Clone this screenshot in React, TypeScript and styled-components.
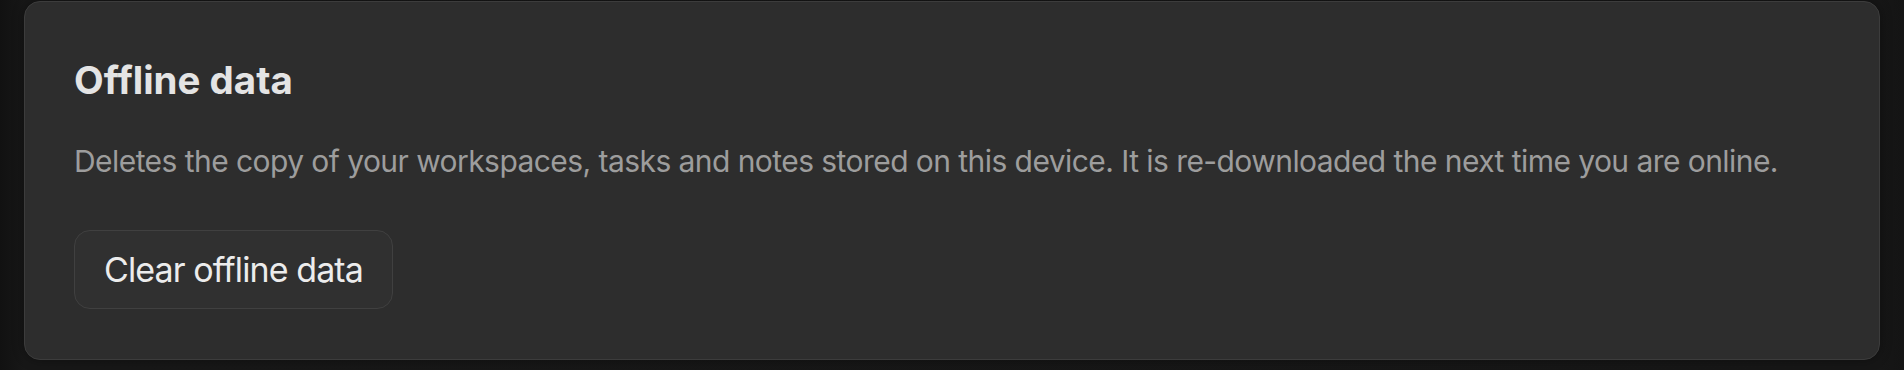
import React from "react";
import styled, { createGlobalStyle } from "styled-components";

const GlobalStyle = createGlobalStyle`
  html, body {
    margin: 0;
    padding: 0;
    background: #151515;
  }
  body {
    font-family: Inter, "Noto Sans", "Liberation Sans", sans-serif;
    -webkit-font-smoothing: antialiased;
  }
`;

const Page = styled.div`
  box-sizing: border-box;
  width: 1904px;
  height: 370px;
  padding: 1px 24px 0 24px;
  background: linear-gradient(90deg, #111111 0px, #171717 24px, #161616 1880px, #141414 1904px);
  overflow: hidden;
`;

const Card = styled.section`
  box-sizing: border-box;
  height: 359px;
  display: flex;
  flex-direction: column;
  align-items: flex-start;
  padding: 55px 49px 0 49px;
  background: #2d2d2d;
  border: 1px solid #3c3c3c;
  border-radius: 16px;
  box-shadow: 0 0 12px rgba(0, 0, 0, 0.35);
`;

const Title = styled.h2`
  flex-shrink: 0;
  margin: 0;
  font-size: 38.5px;
  line-height: 46px;
  font-weight: 700;
  color: #e4e4e4;
  letter-spacing: 0;
`;

const Description = styled.p`
  flex-shrink: 0;
  margin: 40px 0 0 0;
  font-size: 30px;
  line-height: 36px;
  font-weight: 400;
  color: #9d9d9d;
  letter-spacing: -0.56px;
  white-space: nowrap;
`;

const Button = styled.button`
  flex-shrink: 0;
  box-sizing: border-box;
  margin-top: 51px;
  height: 79px;
  padding: 0 29px;
  font-family: inherit;
  font-size: 34px;
  font-weight: 400;
  letter-spacing: -0.9px;
  color: #ececec;
  background: #303030;
  border: 1px solid #404040;
  border-radius: 16px;
  cursor: pointer;
`;

export default function App() {
  return (
    <>
      <GlobalStyle />
      <Page>
        <Card>
          <Title>Offline data</Title>
          <Description>
            Deletes the copy of your workspaces, tasks and notes stored on this device. It is
            re-downloaded the next time you are online.
          </Description>
          <Button type="button">Clear offline data</Button>
        </Card>
      </Page>
    </>
  );
}
